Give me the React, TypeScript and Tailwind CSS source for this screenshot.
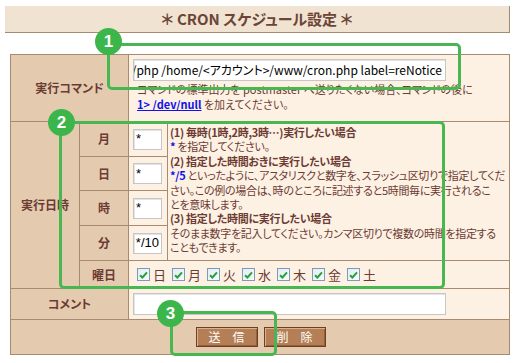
import React from 'react'

const jp = "font-['Noto_Sans_CJK_JP','Noto_Sans',sans-serif] [font-feature-settings:'palt']"

const days = ['日', '月', '火', '水', '木', '金', '土']

function Check() {
  return (
    <span className="inline-flex h-[13px] w-[13px] items-center justify-center border border-[#7d9bb6] bg-gradient-to-br from-[#e4ecf4] to-[#f7fafc]">
      <svg width="9" height="8" viewBox="0 0 9 8">
        <path d="M1 4.2 L3.4 6.5 L8 1.4" fill="none" stroke="#25a23a" strokeWidth="2" />
      </svg>
    </span>
  )
}

function SmallInput({ value, end }: { value: string; end?: boolean }) {
  return (
    <div
      className={`flex h-[21px] w-[29px] items-center overflow-hidden whitespace-nowrap border border-[#c6c6c6] bg-white px-[2px] font-['Liberation_Sans',sans-serif] text-[13px] text-black shadow-[inset_1px_1px_0_#e4e4e4] ${end ? 'justify-end' : 'justify-start'}`}
    >
      {value}
    </div>
  )
}

function Marker({ n, className }: { n: number; className: string }) {
  return (
    <div
      className={`absolute flex h-[27px] w-[27px] items-center justify-center rounded-full bg-[#3cb54b] font-['Liberation_Sans',sans-serif] text-[17px] font-bold text-white ${className}`}
    >
      {n}
    </div>
  )
}

function Btn({ a, b }: { a: string; b: string }) {
  return (
    <button className="flex h-[20px] w-[62px] items-center justify-between whitespace-nowrap border border-[#6e3f20] bg-[#b47f56] px-[12px] text-[12px] leading-none text-white shadow-[inset_1px_1px_0_#dcb18c,inset_-1px_-1px_0_#94603a]">
      <span>{a}</span>
      <span>{b}</span>
    </button>
  )
}

export default function App() {
  const cell = 'border border-[#a88a70]'
  const head = `${cell} bg-[#e4cbb0] text-center font-bold text-[#6c3b33] text-[12px]`
  const body = `${cell} bg-[#fdf1e4]`

  return (
    <div className={`relative h-[363px] w-[521px] overflow-hidden bg-white text-[#6c3b33] ${jp}`}>
      <div className="ml-[5px] mt-[6px] flex h-[27px] w-[505px] items-center justify-center border-b border-r border-[#a88a70] bg-[#f1e3d2] text-[15px] font-bold text-[#6c4538]">
        ＊ CRON スケジュール設定 ＊
      </div>

      <table className="ml-[10px] mt-[21px] w-[499px] table-fixed border-collapse">
        <colgroup>
          <col className="w-[69px]" />
          <col className="w-[49px]" />
          <col className="w-[39px]" />
          <col className="w-[342px]" />
        </colgroup>
        <tbody>
          <tr>
            <td colSpan={2} className={`${head} h-[67px]`}>
              実行コマンド
            </td>
            <td colSpan={2} className={`${body} align-top pl-[4px] pt-[4px]`}>
              <div className="flex h-[22px] w-[313px] items-center justify-end overflow-hidden whitespace-nowrap border border-[#c6c6c6] bg-white pr-[3px] text-[12px] text-black shadow-[inset_1px_1px_0_#e4e4e4]">
                /usr/local/bin/php /home/&lt;アカウント&gt;/www/cron.php label=reNotice
              </div>
              <div className="mt-[1px] whitespace-nowrap pl-[4px] text-[11px] leading-[15px]">
                コマンドの標準出力を postmaster へ送りたくない場合、コマンドの後に
                <br />
                <span className="font-bold text-[#1010ee] underline">1&gt; /dev/null</span> を加えてください。
              </div>
            </td>
          </tr>

          <tr>
            <td rowSpan={5} className={head}>
              実行日時
            </td>
            <td className={`${head} h-[35px]`}>月</td>
            <td className={`${body} pl-[4px]`}>
              <SmallInput value="*" />
            </td>
            <td rowSpan={4} className={`${body} align-top pl-[2px] pt-[3px]`}>
              <div className="whitespace-nowrap text-[11px] leading-[14.4px] tracking-[-0.3px]">
                <div className="font-bold">(1) 毎時(1時,2時,3時…)実行したい場合</div>
                <div>
                  <span className="font-bold text-[#1010ee]">*</span> を指定してください。
                </div>
                <div className="font-bold">(2) 指定した時間おきに実行したい場合</div>
                <div>
                  <span className="font-bold text-[#1010ee]">*/5</span> といったように、アスタリスクと数字を、スラッシュ区切りで指定してくだ
                </div>
                <div>さい。この例の場合は、時のところに記述すると5時間毎に実行されるこ</div>
                <div>とを意味します。</div>
                <div className="font-bold">(3) 指定した時間に実行したい場合</div>
                <div>そのまま数字を記入してください。カンマ区切りで複数の時間を指定する</div>
                <div>こともできます。</div>
              </div>
            </td>
          </tr>
          <tr>
            <td className={`${head} h-[34px]`}>日</td>
            <td className={`${body} pl-[4px]`}>
              <SmallInput value="*" />
            </td>
          </tr>
          <tr>
            <td className={`${head} h-[35px]`}>時</td>
            <td className={`${body} pl-[4px]`}>
              <SmallInput value="*" />
            </td>
          </tr>
          <tr>
            <td className={`${head} h-[35px]`}>分</td>
            <td className={`${body} pl-[4px]`}>
              <SmallInput value="*/10" end />
            </td>
          </tr>
          <tr>
            <td className={`${head} h-[28px]`}>曜日</td>
            <td colSpan={2} className={`${body} pl-[8px]`}>
              <div className="flex items-center text-[13px]">
                {days.map((d) => (
                  <label key={d} className="mr-[6px] flex w-[29px] items-center gap-[3px]">
                    <Check />
                    <span className="font-normal">{d}</span>
                  </label>
                ))}
              </div>
            </td>
          </tr>

          <tr>
            <td colSpan={2} className={`${head} h-[31px]`}>
              コメント
            </td>
            <td colSpan={2} className={`${body} pl-[4px]`}>
              <div className="h-[22px] w-[313px] border border-[#c6c6c6] bg-white shadow-[inset_1px_1px_0_#e4e4e4]" />
            </td>
          </tr>

          <tr>
            <td colSpan={4} className={`${cell} h-[35px] bg-[#e4cbb0]`}>
              <div className="flex justify-center gap-[6px] pl-[1px]">
                <Btn a="送" b="信" />
                <Btn a="削" b="除" />
              </div>
            </td>
          </tr>
        </tbody>
      </table>

      {/* numbered callouts */}
      <div className="pointer-events-none absolute left-[107px] top-[43px] h-[47px] w-[354px] rounded-[5px] border-[3px] border-[#48b752]" />
      <div className="pointer-events-none absolute left-[59px] top-[121px] h-[168px] w-[386px] rounded-[5px] border-[3px] border-[#48b752]" />
      <div className="pointer-events-none absolute left-[170px] top-[311px] h-[45px] w-[107px] rounded-[5px] border-[3px] border-[#48b752]" />
      <Marker n={1} className="left-[95px] top-[28px]" />
      <Marker n={2} className="left-[48px] top-[109px]" />
      <Marker n={3} className="left-[157px] top-[300px]" />
    </div>
  )
}
